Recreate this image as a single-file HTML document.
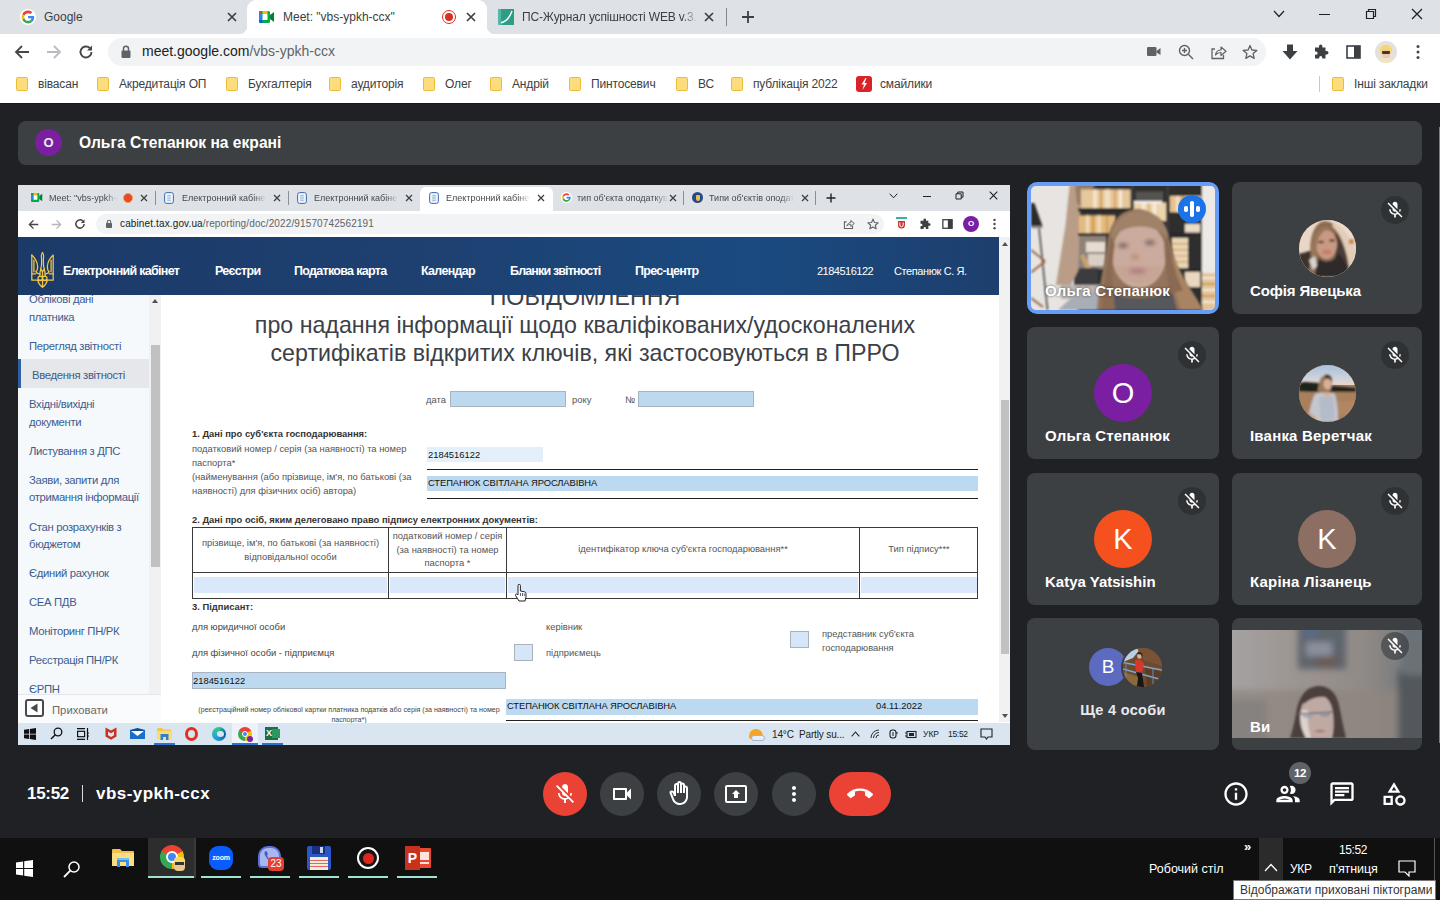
<!DOCTYPE html>
<html lang="uk">
<head>
<meta charset="utf-8">
<title>Meet</title>
<style>
*{box-sizing:border-box;margin:0;padding:0}
html,body{width:1440px;height:900px;overflow:hidden;background:#202124;font-family:"Liberation Sans",sans-serif;}
.abs{position:absolute}
#root{position:relative;width:1440px;height:900px;overflow:hidden;background:#202124}
/* ===== outer chrome ===== */
#tabstrip{left:0;top:0;width:1440px;height:34px;background:#dee1e6}
.otab{position:absolute;top:0;height:34px;font-size:12px;color:#3c4043;line-height:34px;white-space:nowrap}
#tab-active{left:247px;top:0;width:240px;height:34px;background:#fff;border-radius:9px 9px 0 0}
#toolbar{left:0;top:34px;width:1440px;height:34px;background:#fff}
#omnibox{left:108px;top:38px;width:1158px;height:28px;border-radius:14px;background:#f1f3f4}
#bookmarks{left:0;top:68px;width:1440px;height:35px;background:#fff}
.bm{position:absolute;top:68px;height:32px;line-height:32px;font-size:12px;letter-spacing:-0.15px;color:#3c4043;white-space:nowrap}
.folder{position:absolute;top:77px;width:12px;height:14px;background:#fcdc7c;border:1px solid #edbd3a;border-radius:1.5px}
/* ===== meet ===== */
#banner{left:18px;top:121px;width:1404px;height:44px;border-radius:8px;background:#3c4043}
.tile{position:absolute;background:#3c4043;border-radius:8px;overflow:hidden}
.tname{position:absolute;left:18px;bottom:14px;color:#fff;font-weight:bold;font-size:15px;line-height:18px;white-space:nowrap;letter-spacing:.2px}
.mute{position:absolute;right:13px;top:14px;width:28px;height:28px;border-radius:50%;background:rgba(32,33,36,.45)}
.av{position:absolute;border-radius:50%;color:#fff;text-align:center}
/* ===== bottom ===== */
#taskbar{left:0;top:838px;width:1440px;height:62px;background:#101010}
.cbtn{position:absolute;top:772px;width:44px;height:44px;border-radius:50%;background:#3c4043}
</style>
</head>
<body>
<div id="root">

<!-- OUTER CHROME -->
<div id="tabstrip" class="abs"></div>
<div id="tab-active" class="abs"></div>
<div id="toolbar" class="abs"></div>
<div id="omnibox" class="abs"></div>
<div id="bookmarks" class="abs"></div>
<!-- inverse corners of active tab -->
<div class="abs" style="left:239px;top:26px;width:8px;height:8px;background:radial-gradient(circle at 0 0,#dee1e6 8px,#fff 8.5px)"></div>
<div class="abs" style="left:487px;top:26px;width:8px;height:8px;background:radial-gradient(circle at 100% 0,#dee1e6 8px,#fff 8.5px)"></div>
<!-- tab 1: Google -->
<svg class="abs" style="left:20px;top:9px" width="16" height="16" viewBox="0 0 48 48"><circle cx="24" cy="24" r="24" fill="#fff"/><path fill="#EA4335" d="M24 9.5c3.54 0 6.71 1.22 9.21 3.6l6.85-6.85C35.9 2.38 30.47 0 24 0 14.62 0 6.51 5.38 2.56 13.22l7.98 6.19C12.43 13.72 17.74 9.5 24 9.5z" transform="translate(4.8 4.8) scale(.8)"/><path fill="#4285F4" d="M46.98 24.55c0-1.57-.15-3.09-.38-4.55H24v9.02h12.94c-.58 2.96-2.26 5.48-4.78 7.18l7.73 6c4.51-4.18 7.09-10.36 7.09-17.65z" transform="translate(4.8 4.8) scale(.8)"/><path fill="#FBBC05" d="M10.53 28.59c-.48-1.45-.76-2.99-.76-4.59s.27-3.14.76-4.59l-7.98-6.19C.92 16.46 0 20.12 0 24c0 3.880.92 7.540 2.56 10.78l7.97-6.19z" transform="translate(4.8 4.8) scale(.8)"/><path fill="#34A853" d="M24 48c6.48 0 11.93-2.13 15.89-5.81l-7.73-6c-2.15 1.45-4.92 2.3-8.16 2.3-6.26 0-11.570-4.22-13.470-9.91l-7.98 6.190C6.51 42.620 14.620 48 24 48z" transform="translate(4.8 4.800) scale(.8)"/></svg>
<div class="otab" style="left:44px">Google</div>
<svg class="abs" style="left:226px;top:11px" width="12" height="12" viewBox="0 0 12 12"><path d="M2 2 L10 10 M10 2 L2 10" stroke="#3c4043" stroke-width="1.7" fill="none"/></svg>
<!-- tab 2: Meet (active) -->
<svg class="abs" style="left:259px;top:10px" width="16" height="14" viewBox="0 0 16 14"><rect x="0" y="1" width="11" height="12" rx="1.5" fill="#00ac47"/><path d="M0 4 L3.500 1 H0 Z" fill="#ea4335"/><rect x="0" y="4" width="3.500" height="6" fill="#2684fc"/><path d="M0 10 H3.500 V13 H1.500 A1.500 1.500 0 0 1 0 11.500Z" fill="#0066da"/><rect x="3.500" y="1" width="5" height="3" fill="#ffba00"/><rect x="3.5" y="4" width="5" height="6" fill="#fff"/><path d="M11 5 L15 2 V12 L11 9 Z" fill="#00832d"/></svg>
<div class="otab" style="left:283px">Meet: "vbs-ypkh-ccx"</div>
<div class="abs" style="left:442px;top:10px;width:14px;height:14px;border-radius:50%;border:1.5px solid #d93025;background:#fff"></div>
<div class="abs" style="left:445px;top:13px;width:8px;height:8px;border-radius:50%;background:#d93025"></div>
<svg class="abs" style="left:465px;top:11px" width="12" height="12" viewBox="0 0 12 12"><path d="M2 2 L10 10 M10 2 L2 10" stroke="#3c4043" stroke-width="1.7" fill="none"/></svg>
<!-- tab 3 -->
<div class="abs" style="left:498px;top:9px;width:16px;height:16px;background:#2e9d87"></div>
<svg class="abs" style="left:498px;top:9px" width="16" height="16" viewBox="0 0 16 16"><path d="M2 14 C8 13 12 8 14 2" stroke="#fff" stroke-width="1.4" fill="none"/><rect x="0" y="0" width="3" height="16" fill="#54b8a6"/></svg>
<div class="otab" style="left:522px;width:176px;letter-spacing:-0.150px;overflow:hidden;-webkit-mask-image:linear-gradient(90deg,#000 160px,transparent 176px)">ПС-Журнал успішності WEB v.3.0</div>
<svg class="abs" style="left:703px;top:11px" width="12" height="12" viewBox="0 0 12 12"><path d="M2 2 L10 10 M10 2 L2 10" stroke="#3c4043" stroke-width="1.7" fill="none"/></svg>
<div class="abs" style="left:726px;top:8px;width:1px;height:18px;background:#80868b"></div>
<svg class="abs" style="left:741px;top:10px" width="14" height="14" viewBox="0 0 14 14"><path d="M7 1 V13 M1 7 H13" stroke="#3c4043" stroke-width="1.800" fill="none"/></svg>
<!-- window controls -->
<svg class="abs" style="left:1273px;top:10px" width="12" height="8" viewBox="0 0 12 8"><path d="M1 1 L6 6.500 L11 1" stroke="#202124" stroke-width="1.2" fill="none"/></svg>
<div class="abs" style="left:1319px;top:14px;width:11px;height:1.200px;background:#202124"></div>
<svg class="abs" style="left:1365px;top:8px" width="12" height="12" viewBox="0 0 12 12"><path d="M1.500 3.500 H8.500 V10.500 H1.500 Z M3.500 3.500 V1.500 H10.500 V8.500 H8.500" stroke="#202124" stroke-width="1.200" fill="none"/></svg>
<svg class="abs" style="left:1411px;top:8px" width="12" height="12" viewBox="0 0 12 12"><path d="M1 1 L11 11 M11 1 L1 11" stroke="#202124" stroke-width="1.300" fill="none"/></svg>
<!-- nav buttons -->
<svg class="abs" style="left:14px;top:44px" width="16" height="16" viewBox="0 0 16 16"><path d="M15 8 H2 M8 2 L2 8 L8 14" stroke="#474747" stroke-width="1.800" fill="none"/></svg>
<svg class="abs" style="left:46px;top:44px" width="16" height="16" viewBox="0 0 16 16"><path d="M1 8 H14 M8 2 L14 8 L8 14" stroke="#b8bcc1" stroke-width="1.800" fill="none"/></svg>
<svg class="abs" style="left:78px;top:44px" width="16" height="16" viewBox="0 0 16 16"><path d="M13.500 8 A5.500 5.500 0 1 1 11.800 4" stroke="#474747" stroke-width="1.900" fill="none"/><path d="M14 1.500 V6.500 H9 Z" fill="#474747"/></svg>
<!-- lock -->
<svg class="abs" style="left:120px;top:45px" width="12" height="14" viewBox="0 0 12 14"><rect x="1.500" y="5.500" width="9" height="7.500" rx="1" fill="#5f6368"/><path d="M3.500 6 V3.800 A2.500 2.500 0 0 1 8.500 3.800 V6" stroke="#5f6368" stroke-width="1.500" fill="none"/></svg>
<div class="abs" style="left:142px;top:34px;height:34px;line-height:35px;font-size:14px;color:#202124;white-space:nowrap">meet.google.com<span style="color:#5f6368">/vbs-ypkh-ccx</span></div>
<!-- omnibox right icons -->
<svg class="abs" style="left:1147px;top:46px" width="14" height="11" viewBox="0 0 14 11"><rect x="0" y="1" width="9.500" height="9" rx="1.200" fill="#5f6368"/><path d="M9.500 5 L13.500 2 V9 L9.500 6.500Z" fill="#5f6368"/></svg>
<svg class="abs" style="left:1178px;top:44px" width="16" height="16" viewBox="0 0 16 16"><circle cx="6.500" cy="6.500" r="5" stroke="#5f6368" stroke-width="1.400" fill="none"/><path d="M10.300 10.300 L15 15 M4 6.500 H9 M6.500 4 V9" stroke="#5f6368" stroke-width="1.400" fill="none"/></svg>
<svg class="abs" style="left:1210px;top:44px" width="17" height="16" viewBox="0 0 17 16"><path d="M5 5 H2 V14.500 H13.500 V11" stroke="#5f6368" stroke-width="1.300" fill="none"/><path d="M5.500 11 C6 7.500 8.500 6 11 6 V3 L16 7.300 L11 11.500 V8.500 C8.500 8.500 7 9 5.500 11Z" stroke="#5f6368" stroke-width="1.200" fill="none" stroke-linejoin="round"/></svg>
<svg class="abs" style="left:1242px;top:44px" width="16" height="16" viewBox="0 0 16 16"><path d="M8 1.500 L9.900 6 L14.800 6.400 L11.100 9.600 L12.200 14.400 L8 11.900 L3.800 14.400 L4.900 9.600 L1.200 6.400 L6.100 6 Z" stroke="#5f6368" stroke-width="1.300" fill="none" stroke-linejoin="round"/></svg>
<!-- toolbar right icons -->
<svg class="abs" style="left:1282px;top:44px" width="16" height="16" viewBox="0 0 16 16"><path d="M5 0.500 H11 V7 H15.500 L8 15.500 L0.500 7 H5 Z" fill="#3c4043"/></svg>
<svg class="abs" style="left:1313px;top:44px" width="16" height="16" viewBox="0 0 16 16"><path d="M6 2.200 a1.700 1.700 0 0 1 3.400 0 V3.500 H12.500 V7 H13.800 a1.700 1.700 0 0 1 0 3.400 H12.500 V14.500 H9.200 V13.500 a1.500 1.500 0 0 0 -3 0 V14.500 H2 V10.800 H3 a1.600 1.600 0 0 0 0 -3.200 H2 V3.500 H6 Z" fill="#3c4043"/></svg>
<svg class="abs" style="left:1346px;top:45px" width="15" height="14" viewBox="0 0 15 14"><rect x="1" y="1" width="13" height="12" stroke="#3c4043" stroke-width="1.600" fill="none"/><rect x="8" y="1" width="6" height="12" fill="#3c4043"/></svg>
<div class="abs" style="left:1375px;top:41px;width:22px;height:22px;border-radius:50%;background:#e4e0da;overflow:hidden"><div class="abs" style="left:5px;top:4px;width:12px;height:10px;border-radius:50% 50% 40% 40%;background:#f5d76b"></div><div class="abs" style="left:7px;top:8px;width:8px;height:9px;border-radius:40%;background:#f1c9a8"></div><div class="abs" style="left:7px;top:10px;width:8px;height:2.500px;background:#3b3b3b;border-radius:1px"></div><div class="abs" style="left:4px;top:17px;width:14px;height:6px;border-radius:50% 50% 0 0;background:#f0e4c4"></div></div>
<svg class="abs" style="left:1416px;top:44px" width="4" height="16" viewBox="0 0 4 16"><circle cx="2" cy="2.500" r="1.500" fill="#474747"/><circle cx="2" cy="8" r="1.500" fill="#474747"/><circle cx="2" cy="13.500" r="1.500" fill="#474747"/></svg>
<!-- bookmarks -->
<div class="folder" style="left:16px"></div><div class="bm" style="left:38px">вівасан</div>
<div class="folder" style="left:97px"></div><div class="bm" style="left:119px">Акредитація ОП</div>
<div class="folder" style="left:226px"></div><div class="bm" style="left:248px">Бухгалтерія</div>
<div class="folder" style="left:329px"></div><div class="bm" style="left:351px">аудиторія</div>
<div class="folder" style="left:423px"></div><div class="bm" style="left:445px">Олег</div>
<div class="folder" style="left:490px"></div><div class="bm" style="left:512px">Андрій</div>
<div class="folder" style="left:569px"></div><div class="bm" style="left:591px">Пинтосевич</div>
<div class="folder" style="left:676px"></div><div class="bm" style="left:698px">ВС</div>
<div class="folder" style="left:731px"></div><div class="bm" style="left:753px">публікація 2022</div>
<div class="abs" style="left:856px;top:76px;width:16px;height:16px;border-radius:3px;background:#d8232a"></div>
<svg class="abs" style="left:856px;top:76px" width="16" height="16" viewBox="0 0 16 16"><path d="M9.500 2 L5.500 8.500 H8 L6.500 14 L11 7 H8.500 L10.500 2 Z" fill="#fff"/></svg>
<div class="bm" style="left:880px">смайлики</div>
<div class="abs" style="left:1319px;top:76px;width:1px;height:16px;background:#c4c7cc"></div>
<div class="folder" style="left:1332px"></div><div class="bm" style="left:1354px">Інші закладки</div>
<!--CHROME-DETAILS-END-->

<!-- MEET BANNER -->
<div class="abs" style="left:1438.500px;top:127px;width:1.500px;height:616px;background:#7c7e80"></div>
<div class="abs" style="left:0;top:103px;width:1440px;height:1px;background:#17181a"></div>
<div id="banner" class="abs"></div>
<!-- banner details -->
<div class="av abs" style="left:35px;top:129px;width:27px;height:27px;background:#7b1fa2;font-size:13px;font-weight:bold;line-height:27px;color:#e8eaed">O</div>
<div class="abs" style="left:79px;top:121px;height:44px;line-height:43px;color:#fff;font-size:15.600px;font-weight:bold;white-space:nowrap">Ольга Степанюк на екрані</div>


<!-- SHARED SCREEN -->
<div id="share" class="abs" style="left:18px;top:184px;width:992px;height:561px;background:#fff;overflow:hidden">
<style>
#share{font-family:"Liberation Sans",sans-serif}
.itab{position:absolute;top:1px;height:26px;line-height:26px;font-size:9px;color:#45494d;white-space:nowrap;overflow:hidden}
.ix{position:absolute;top:10px;width:8px;height:8px}
.side{position:absolute;left:11px;font-size:11.300px;color:#3b5d8f;white-space:nowrap;letter-spacing:-0.33px}
.nav{position:absolute;top:58px;height:58px;line-height:58px;color:#fff;font-weight:bold;font-size:12.500px;white-space:nowrap;letter-spacing:-0.700px}
.d{position:absolute;font-size:9.400px;color:#555;white-space:nowrap}
.db{position:absolute;font-size:9.400px;color:#333;font-weight:bold;white-space:nowrap}
.dv{position:absolute;font-size:9.400px;color:#111;white-space:nowrap}
.fld{position:absolute;background:#bdd9ef}
.cb{position:absolute;width:19px;height:17px;background:#d5e6f8;border:1px solid #aab3bd}
.ln{position:absolute;height:1px;background:#222}
</style>
<!-- coordinates inside #share are relative to (18,184) -->
<div class="abs" style="left:0;top:0;width:992px;height:1px;background:#202124"></div>
<div class="abs" style="left:0;top:1px;width:992px;height:26px;background:#dee1e6"></div>
<!-- active inner tab -->
<div class="abs" style="left:402px;top:3px;width:133px;height:24px;background:#fff;border-radius:6px 6px 0 0"></div>
<!-- tab1 meet -->
<svg class="abs" style="left:13px;top:8px" width="12" height="11" viewBox="0 0 16 14"><rect x="0" y="1" width="11" height="12" rx="1.5" fill="#00ac47"/><path d="M0 4 L3.500 1 H0 Z" fill="#ea4335"/><rect x="0" y="4" width="3.5" height="6" fill="#2684fc"/><rect x="3.5" y="1" width="5" height="3" fill="#ffba00"/><rect x="3.500" y="4" width="5" height="6" fill="#fff"/><path d="M11 5 L15 2 V12 L11 9 Z" fill="#00832d"/></svg>
<div class="itab" style="left:31px;width:69px;-webkit-mask-image:linear-gradient(90deg,#000 56px,transparent 69px)">Meet: "vbs-ypkh-ccx"</div>
<div class="abs" style="left:105px;top:9px;width:10px;height:10px;border-radius:50%;background:#e8472f;border:1.5px solid #f0a030"></div>
<svg class="ix" style="left:122px" viewBox="0 0 8 8"><path d="M1 1 L7 7 M7 1 L1 7" stroke="#3c4043" stroke-width="1.3"/></svg>
<div class="abs" style="left:137px;top:7px;width:1px;height:14px;background:#8a8f96"></div>
<!-- tab2 -->
<svg class="abs" style="left:146px;top:8px" width="10" height="12" viewBox="0 0 10 12"><rect x=".6" y=".6" width="8.800" height="10.800" rx="2" fill="#eef3fa" stroke="#3d6db0" stroke-width="1"/><path d="M3.200 3.800 H6.800 M3.200 6 H6.800 M3.200 8.200 H6.800" stroke="#3d6db0" stroke-width=".55"/></svg>
<div class="itab" style="left:164px;width:84px;-webkit-mask-image:linear-gradient(90deg,#000 72px,transparent 84px)">Електронний кабінет</div>
<svg class="ix" style="left:255px" viewBox="0 0 8 8"><path d="M1 1 L7 7 M7 1 L1 7" stroke="#3c4043" stroke-width="1.300"/></svg>
<div class="abs" style="left:270px;top:7px;width:1px;height:14px;background:#8a8f96"></div>
<!-- tab3 -->
<svg class="abs" style="left:279px;top:8px" width="10" height="12" viewBox="0 0 10 12"><rect x=".6" y=".6" width="8.800" height="10.800" rx="2" fill="#eef3fa" stroke="#3d6db0" stroke-width="1"/><path d="M3.200 3.800 H6.800 M3.200 6 H6.800 M3.200 8.200 H6.800" stroke="#3d6db0" stroke-width=".55"/></svg>
<div class="itab" style="left:296px;width:84px;-webkit-mask-image:linear-gradient(90deg,#000 72px,transparent 84px)">Електронний кабінет</div>
<svg class="ix" style="left:387px" viewBox="0 0 8 8"><path d="M1 1 L7 7 M7 1 L1 7" stroke="#3c4043" stroke-width="1.300"/></svg>
<!-- tab4 active -->
<svg class="abs" style="left:411px;top:8px" width="10" height="12" viewBox="0 0 10 12"><rect x=".6" y=".6" width="8.800" height="10.800" rx="2" fill="#eef3fa" stroke="#3d6db0" stroke-width="1"/><path d="M3.200 3.800 H6.800 M3.200 6 H6.800 M3.200 8.200 H6.800" stroke="#3d6db0" stroke-width=".55"/></svg>
<div class="itab" style="left:428px;width:84px;-webkit-mask-image:linear-gradient(90deg,#000 72px,transparent 84px)">Електронний кабінет</div>
<svg class="ix" style="left:519px" viewBox="0 0 8 8"><path d="M1 1 L7 7 M7 1 L1 7" stroke="#3c4043" stroke-width="1.300"/></svg>
<!-- tab5 google -->
<svg class="abs" style="left:543px;top:8px" width="11" height="11" viewBox="0 0 48 48"><circle cx="24" cy="24" r="24" fill="#fff"/><path fill="#EA4335" d="M24 13c3 0 5.400 1 7.300 2.800l5.400-5.400C33.400 7.300 29 5.500 24 5.500c-7.500 0-14 4.300-17 10.500l6.300 4.900C14.800 16.400 19 13 24 13z"/><path fill="#4285F4" d="M42.400 24.400c0-1.300-.1-2.500-.3-3.600H24v7.200h10.400c-.5 2.400-1.800 4.400-3.800 5.700l6.200 4.800c3.600-3.300 5.600-8.300 5.600-14.100z"/><path fill="#FBBC05" d="M13.300 27.700c-.4-1.200-.6-2.400-.6-3.700s.2-2.500.6-3.700L7 15.400C5.700 18 5 20.900 5 24s.7 6 2 8.600l6.300-4.900z"/><path fill="#34A853" d="M24 43c5.200 0 9.500-1.700 12.700-4.600l-6.200-4.800c-1.700 1.200-3.900 1.800-6.500 1.800-5 0-9.200-3.400-10.700-7.900L7 32.400C10 38.700 16.500 43 24 43z"/></svg>
<div class="itab" style="left:559px;width:91px;-webkit-mask-image:linear-gradient(90deg,#000 78px,transparent 91px)">тип об'єкта оподаткування</div>
<svg class="ix" style="left:651px" viewBox="0 0 8 8"><path d="M1 1 L7 7 M7 1 L1 7" stroke="#3c4043" stroke-width="1.300"/></svg>
<div class="abs" style="left:665px;top:7px;width:1px;height:14px;background:#8a8f96"></div>
<!-- tab6 -->
<div class="abs" style="left:674px;top:8px;width:11px;height:11px;border-radius:50%;background:#274b8a"></div>
<div class="abs" style="left:677.500px;top:10.500px;width:4px;height:6px;border-radius:1px 1px 2px 2px;background:#e7c24d"></div>
<div class="itab" style="left:691px;width:85px;-webkit-mask-image:linear-gradient(90deg,#000 72px,transparent 85px)">Типи об'єктів оподаткування</div>
<svg class="ix" style="left:783px" viewBox="0 0 8 8"><path d="M1 1 L7 7 M7 1 L1 7" stroke="#3c4043" stroke-width="1.300"/></svg>
<div class="abs" style="left:797px;top:7px;width:1px;height:14px;background:#8a8f96"></div>
<svg class="abs" style="left:808px;top:9px" width="10" height="10" viewBox="0 0 10 10"><path d="M5 .500 V9.500 M.500 5 H9.500" stroke="#202124" stroke-width="1.400"/></svg>
<!-- inner window controls -->
<svg class="abs" style="left:871px;top:9px" width="9" height="6" viewBox="0 0 9 6"><path d="M.700 .700 L4.500 4.800 L8.300 .700" stroke="#202124" stroke-width="1" fill="none"/></svg>
<div class="abs" style="left:905px;top:12px;width:8px;height:1.300px;background:#202124"></div>
<svg class="abs" style="left:937px;top:7px" width="9" height="9" viewBox="0 0 9 9"><path d="M1 2.800 H6.200 V8 H1 Z M2.800 2.800 V1 H8 V6.200 H6.200" stroke="#202124" stroke-width="1" fill="none"/></svg>
<svg class="abs" style="left:971px;top:7px" width="9" height="9" viewBox="0 0 9 9"><path d="M.700 .700 L8.300 8.300 M8.300 .700 L.700 8.300" stroke="#202124" stroke-width="1.100"/></svg>
<!-- inner toolbar -->
<div class="abs" style="left:0;top:27px;width:992px;height:26px;background:#fff"></div>
<div class="abs" style="left:78px;top:30px;width:788px;height:20px;border-radius:10px;background:#f1f3f4"></div>
<svg class="abs" style="left:10px;top:35px" width="11" height="11" viewBox="0 0 16 16"><path d="M15 8 H2 M8 2 L2 8 L8 14" stroke="#474747" stroke-width="2" fill="none"/></svg>
<svg class="abs" style="left:33px;top:35px" width="11" height="11" viewBox="0 0 16 16"><path d="M1 8 H14 M8 2 L14 8 L8 14" stroke="#b3b7bc" stroke-width="2" fill="none"/></svg>
<svg class="abs" style="left:56px;top:34px" width="12" height="12" viewBox="0 0 16 16"><path d="M13.500 8 A5.500 5.500 0 1 1 11.800 4" stroke="#474747" stroke-width="2" fill="none"/><path d="M14 1.500 V6.500 H9 Z" fill="#474747"/></svg>
<svg class="abs" style="left:87px;top:35px" width="8" height="10" viewBox="0 0 12 14"><rect x="1.500" y="5.500" width="9" height="7.500" rx="1" fill="#5f6368"/><path d="M3.500 6 V3.800 A2.500 2.500 0 0 1 8.500 3.800 V6" stroke="#5f6368" stroke-width="1.600" fill="none"/></svg>
<div class="abs" style="left:102px;top:27px;height:26px;line-height:26px;font-size:10px;color:#202124;white-space:nowrap;letter-spacing:.13px">cabinet.tax.gov.ua<span style="color:#5f6368">/reporting/doc/2022/91570742562191</span></div>
<svg class="abs" style="left:825px;top:34px" width="12" height="12" viewBox="0 0 17 16"><path d="M5 5 H2 V14.500 H13.500 V11" stroke="#5f6368" stroke-width="1.500" fill="none"/><path d="M5.500 11 C6 7.500 8.500 6 11 6 V3 L16 7.300 L11 11.500 V8.500 C8.500 8.500 7 9 5.500 11Z" stroke="#5f6368" stroke-width="1.400" fill="none" stroke-linejoin="round"/></svg>
<svg class="abs" style="left:849px;top:34px" width="12" height="12" viewBox="0 0 16 16"><path d="M8 1.500 L9.900 6 L14.800 6.400 L11.100 9.600 L12.200 14.400 L8 11.900 L3.800 14.400 L4.900 9.600 L1.200 6.400 L6.100 6 Z" stroke="#5f6368" stroke-width="1.500" fill="none" stroke-linejoin="round"/></svg>
<div class="abs" style="left:878px;top:33px;width:11px;height:1.500px;background:#3ab0a0"></div>
<svg class="abs" style="left:879px;top:36px" width="9" height="9" viewBox="0 0 9 9"><path d="M1 1 H8 V5 A3.500 3.500 0 0 1 1 5 Z" fill="#c8372d"/><path d="M2.800 2.500 V5 A1.700 1.700 0 0 0 6.200 5 V2.500" stroke="#fff" stroke-width="1" fill="none"/></svg>
<svg class="abs" style="left:901px;top:34px" width="12" height="12" viewBox="0 0 16 16"><path d="M6 2.200 a1.700 1.700 0 0 1 3.400 0 V3.500 H12.500 V7 H13.800 a1.700 1.700 0 0 1 0 3.400 H12.500 V14.500 H9.200 V13.500 a1.500 1.500 0 0 0 -3 0 V14.500 H2 V10.800 H3 a1.600 1.600 0 0 0 0 -3.200 H2 V3.500 H6 Z" fill="#3c4043"/></svg>
<svg class="abs" style="left:924px;top:35px" width="11" height="10" viewBox="0 0 15 14"><rect x="1" y="1" width="13" height="12" stroke="#3c4043" stroke-width="1.800" fill="none"/><rect x="8" y="1" width="6" height="12" fill="#3c4043"/></svg>
<div class="abs" style="left:945px;top:32px;width:16px;height:16px;border-radius:50%;background:#7b1fa2;color:#fff;font-size:8px;font-weight:bold;text-align:center;line-height:16px">O</div>
<svg class="abs" style="left:975px;top:34px" width="3" height="12" viewBox="0 0 4 16"><circle cx="2" cy="2.500" r="1.600" fill="#474747"/><circle cx="2" cy="8" r="1.600" fill="#474747"/><circle cx="2" cy="13.500" r="1.600" fill="#474747"/></svg>
<!-- site header -->
<div class="abs" style="left:0;top:53px;width:981px;height:58px;background:linear-gradient(90deg,#1c3a68 0%,#1d4172 45%,#1a4a80 75%,#1d3f6e 100%)"></div>
<div class="abs" style="left:981px;top:53px;width:11px;height:485px;background:#f1f1f1"></div>
<svg class="abs" style="left:13px;top:68px" width="23" height="36" viewBox="0 0 23 36"><g stroke="#f3c744" stroke-width="1.250" fill="none" stroke-linejoin="round" stroke-linecap="round">
<path d="M0.800 3 V28.200 H6.600 C7.600 31.800 9.400 34 11.500 35.300 C13.600 34 15.400 31.800 16.400 28.200 H22.200 V3 C18.500 6.500 16.600 10 16.400 14.500 C16.300 17.500 17 19 18.200 19.600 C17.500 21.200 15.800 22 14 22"/>
<path d="M0.800 3 C4.500 6.500 6.400 10 6.600 14.500 C6.700 17.500 6 19 4.800 19.600 C5.500 21.200 7.200 22 9 22"/>
<path d="M11.500 .600 C10.300 2.200 10.200 4 10.500 6 C10.800 10 10.600 14 9.800 17 C9 20 8.400 22 9 24.500"/>
<path d="M11.500 .600 C12.700 2.200 12.800 4 12.500 6 C12.200 10 12.400 14 13.200 17 C14 20 14.600 22 14 24.500"/>
<path d="M0.800 21.800 H4.800 M18.200 21.800 H22.200 M2.900 8 V19.800 M20.100 8 V19.800"/>
<circle cx="9.300" cy="26.300" r="2.300"/><circle cx="13.700" cy="26.300" r="2.300"/>
<path d="M11.500 19 V35 M6.600 28.200 H16.400 M9.800 17 L11.500 20 L13.200 17"/>
</g></svg>

<div class="nav" style="left:45px">Електронний кабінет</div>
<div class="nav" style="left:197px">Реєстри</div>
<div class="nav" style="left:276px">Податкова карта</div>
<div class="nav" style="left:403px">Календар</div>
<div class="nav" style="left:492px;letter-spacing:-0.850px">Бланки звітності</div>
<div class="nav" style="left:617px">Прес-центр</div>
<div class="nav" style="left:799px;font-weight:normal;font-size:11px;letter-spacing:-0.500px">2184516122</div>
<div class="nav" style="left:876px;font-weight:normal;font-size:11px;letter-spacing:-0.400px">Степанюк С. Я.</div>
<!-- sidebar -->
<div class="abs" style="left:0;top:111px;width:131px;height:428px;background:#f6f9fc"></div>
<div class="abs" style="left:131px;top:111px;width:12px;height:400px;background:#f1f1f1"></div>
<div class="abs" style="left:133px;top:161px;width:9px;height:222px;background:#c1c1c1"></div>
<svg class="abs" style="left:134px;top:115px" width="6" height="4" viewBox="0 0 6 4"><path d="M0 4 L3 0 L6 4Z" fill="#505050"/></svg>
<div class="abs" style="left:0;top:175px;width:131px;height:29px;background:#e5e7ea"></div>
<div class="abs" style="left:0;top:175px;width:3px;height:29px;background:#2f5fa3"></div>
<div class="side" style="top:108.5px">Облікові дані</div>
<div class="side" style="top:126.5px">платника</div>
<div class="side" style="top:155.5px">Перегляд звітності</div>
<div class="side" style="top:184.5px;left:14px">Введення звітності</div>
<div class="side" style="top:213.5px">Вхідні/вихідні</div>
<div class="side" style="top:231.5px">документи</div>
<div class="side" style="top:260.5px">Листування з ДПС</div>
<div class="side" style="top:289.5px">Заяви, запити для</div>
<div class="side" style="top:306.5px">отримання інформації</div>
<div class="side" style="top:336.5px">Стан розрахунків з</div>
<div class="side" style="top:353.5px">бюджетом</div>
<div class="side" style="top:382.5px">Єдиний рахунок</div>
<div class="side" style="top:411.5px">СЕА ПДВ</div>
<div class="side" style="top:440.5px">Моніторинг ПН/РК</div>
<div class="side" style="top:469.5px">Реєстрація ПН/РК</div>
<div class="side" style="top:498.5px">ЄРПН</div>
<!-- hide footer -->
<div class="abs" style="left:0;top:510px;width:143px;height:29px;background:#fafbfc;border-top:1px solid #e3e6ea"></div>
<div class="abs" style="left:7px;top:515px;width:19px;height:18px;border:2px solid #4a4a4a;border-radius:3px;background:#fff"></div>
<svg class="abs" style="left:12px;top:519px" width="8" height="10" viewBox="0 0 8 10"><path d="M7.500 .500 V9.500 L.500 5Z" fill="#4a4a4a"/></svg>
<div class="abs" style="left:34px;top:519px;font-size:11.300px;color:#6a6a6a;white-space:nowrap;line-height:14px">Приховати</div>

<!-- doc area -->
<div class="abs" id="doc" style="left:143px;top:111px;width:838px;height:428px;overflow:hidden;background:#fff">
<div class="abs" style="left:-143px;top:-111px;width:992px;height:561px">
<div class="abs" style="left:167px;top:99px;width:800px;text-align:center;font-size:23.200px;line-height:28px;color:#3c4047;white-space:nowrap">ПОВІДОМЛЕННЯ<br>про надання інформації щодо кваліфікованих/удосконалених<br>сертифікатів відкритих ключів, які застосовуються в ПРРО</div>
<!-- date row -->
<div class="d" style="left:408px;top:210px">дата</div>
<div class="fld" style="left:432px;top:207px;width:116px;height:16px;border:1px solid #a9b4c0"></div>
<div class="d" style="left:554px;top:210px">року</div>
<div class="d" style="left:607px;top:210px">№</div>
<div class="fld" style="left:620px;top:207px;width:116px;height:16px;border:1px solid #a9b4c0"></div>
<!-- section 1 -->
<div class="db" style="left:174px;top:244px">1. Дані про суб'єкта господарювання:</div>
<div class="d" style="left:174px;top:258px;line-height:14px">податковий номер / серія (за наявності) та номер<br>паспорта*<br>(найменування (або прізвище, ім'я, по батькові (за<br>наявності) для фізичних осіб) автора)</div>
<div class="abs" style="left:409px;top:263px;width:116px;height:15px;background:#e3f0fb"></div>
<div class="dv" style="left:410px;top:265px">2184516122</div>
<div class="ln" style="left:409px;top:285px;width:551px"></div>
<div class="fld" style="left:409px;top:292px;width:551px;height:15px"></div>
<div class="dv" style="left:410px;top:293px;letter-spacing:-0.100px">СТЕПАНЮК СВІТЛАНА ЯРОСЛАВІВНА</div>
<div class="ln" style="left:409px;top:314px;width:551px"></div>
<!-- section 2 -->
<div class="db" style="left:174px;top:330px">2. Дані про осіб, яким делеговано право підпису електронних документів:</div>
<div class="abs" style="left:174px;top:343px;width:786px;height:72px;border:1px solid #3a3a3a"></div>
<div class="abs" style="left:174px;top:388px;width:786px;height:1px;background:#3a3a3a"></div>
<div class="abs" style="left:370px;top:343px;width:1px;height:72px;background:#3a3a3a"></div>
<div class="abs" style="left:488px;top:343px;width:1px;height:72px;background:#3a3a3a"></div>
<div class="abs" style="left:841px;top:343px;width:1px;height:72px;background:#3a3a3a"></div>
<div class="abs" style="left:176px;top:393px;width:193px;height:16px;background:#d9e9fb"></div>
<div class="abs" style="left:372px;top:393px;width:115px;height:16px;background:#d9e9fb"></div>
<div class="abs" style="left:490px;top:393px;width:350px;height:16px;background:#d9e9fb"></div>
<div class="abs" style="left:843px;top:393px;width:116px;height:16px;background:#d9e9fb"></div>
<div class="d" style="left:175px;top:352px;width:195px;text-align:center;line-height:13.500px">прізвище, ім'я, по батькові (за наявності)<br>відповідальної особи</div>
<div class="d" style="left:371px;top:345px;width:117px;text-align:center;line-height:13.500px">податковий номер / серія<br>(за наявності) та номер<br>паспорта *</div>
<div class="d" style="left:489px;top:359px;width:352px;text-align:center">ідентифікатор ключа суб'єкта господарювання**</div>
<div class="d" style="left:842px;top:359px;width:118px;text-align:center">Тип підпису***</div>
<!-- section 3 -->
<div class="db" style="left:174px;top:417px">3. Підписант:</div>
<div class="d" style="left:174px;top:437px;color:#444">для юридичної особи</div>
<div class="d" style="left:528px;top:437px">керівник</div>
<div class="d" style="left:174px;top:463px;color:#444">для фізичної особи - підприємця</div>
<div class="cb" style="left:496px;top:460px"></div>
<div class="d" style="left:528px;top:463px">підприємець</div>
<div class="cb" style="left:772px;top:447px"></div>
<div class="d" style="left:804px;top:443px;line-height:14px">представник суб'єкта<br>господарювання</div>
<div class="fld" style="left:174px;top:488px;width:314px;height:17px;border:1px solid #a9b4c0"></div>
<div class="dv" style="left:175px;top:491px">2184516122</div>
<div class="d" style="left:174px;top:521px;width:314px;text-align:center;font-size:7.100px;line-height:10px;color:#444">(реєстраційний номер облікової картки платника податків або серія (за наявності) та номер<br>паспорта*)</div>
<div class="fld" style="left:488px;top:515px;width:472px;height:16px"></div>
<div class="dv" style="left:489px;top:516px;letter-spacing:-0.100px">СТЕПАНЮК СВІТЛАНА ЯРОСЛАВІВНА</div>
<div class="dv" style="left:858px;top:515.500px">04.11.2022</div>
<div class="ln" style="left:488px;top:536px;width:472px"></div>
<!-- cursor hand -->
<svg class="abs" style="left:496px;top:400px" width="14" height="18" viewBox="0 0 14 18"><path d="M4 1.500 a1.200 1.200 0 0 1 2.400 0 V7 L10.500 7.800 a1.800 1.800 0 0 1 1.500 1.800 V13 L11 17 H5 L1.500 11.500 a1.100 1.100 0 0 1 1.800 -1.200 L4 11 Z" fill="#fff" stroke="#222" stroke-width="1"/><path d="M6.500 9 V12 M8.500 9 V12 M10.300 9.500 V12" stroke="#222" stroke-width=".7"/></svg>
</div>
</div>
<!-- right scrollbar bits -->
<div class="abs" style="left:983px;top:216px;width:8px;height:254px;background:#c1c1c1"></div>
<svg class="abs" style="left:984px;top:58px" width="6" height="4" viewBox="0 0 6 4"><path d="M0 4 L3 0 L6 4Z" fill="#505050"/></svg>
<svg class="abs" style="left:984px;top:530px" width="6" height="4" viewBox="0 0 6 4"><path d="M0 0 L3 4 L6 0Z" fill="#505050"/></svg>

<!-- inner taskbar -->
<div class="abs" style="left:0;top:539px;width:992px;height:22px;background:#d9e5f1"></div>
<div class="abs" style="left:214px;top:539px;width:26px;height:22px;background:#ecf2f8"></div>
<svg class="abs" style="left:6px;top:544px" width="12" height="12" viewBox="0 0 12 12"><path d="M0 1.700 L5 1 V5.700 H0Z M5.800 .900 L12 0 V5.700 H5.800Z M0 6.400 H5 V11 L0 10.300Z M5.800 6.400 H12 V12 L5.800 11.100Z" fill="#111"/></svg>
<svg class="abs" style="left:32px;top:543px" width="13" height="13" viewBox="0 0 13 13"><circle cx="8" cy="5" r="3.800" stroke="#111" stroke-width="1.300" fill="none"/><path d="M5.300 7.700 L1 12" stroke="#111" stroke-width="1.500"/></svg>
<svg class="abs" style="left:58px;top:544px" width="13" height="12" viewBox="0 0 13 12"><path d="M1 .700 H9 M1 11.300 H9 M11.500 0 V12" stroke="#111" stroke-width="1.200"/><rect x="1.600" y="3.300" width="7" height="5.400" stroke="#111" stroke-width="1.200" fill="none"/><path d="M11.500 5 H13 M11.500 8 H13" stroke="#111" stroke-width="1"/></svg>
<svg class="abs" style="left:87px;top:543px" width="12" height="13" viewBox="0 0 12 13"><path d="M.500 .500 L6 3.500 L11.500 .500 V9.500 L6 12.700 L.500 9.500Z" fill="#c8321f"/><path d="M3 4.500 L6 6.300 L9 4.500 V8.300 L6 10 L3 8.300Z" fill="#d9e5f1"/></svg>
<svg class="abs" style="left:112px;top:544px" width="15" height="11" viewBox="0 0 15 11"><rect x="0" y="2" width="15" height="9" fill="#1a6fc9"/><path d="M0 2 L7.500 0 L15 2 L7.500 7.500Z" fill="#0f4d9a"/><path d="M1 3 H14 L7.500 8Z" fill="#fff"/></svg>
<svg class="abs" style="left:139px;top:543px" width="15" height="13" viewBox="0 0 15 13"><path d="M0 1 H5 L6.500 2.500 H14 V12 H0Z" fill="#f7c648"/><rect x="0" y="4" width="15" height="8.500" fill="#fbdc74"/><rect x="3.500" y="7" width="8" height="6" fill="#2f7fd6"/><rect x="6" y="10" width="3" height="3" fill="#fbdc74"/></svg>
<div class="abs" style="left:136px;top:559px;width:21px;height:2px;background:#2a72d4"></div>
<div class="abs" style="left:167px;top:543px;width:13px;height:14px;border-radius:50%;border:3px solid #e0311f"></div>
<div class="abs" style="left:194px;top:543px;width:14px;height:14px;border-radius:50%;background:conic-gradient(from 200deg,#1b9de2,#35c1a0 120deg,#2bc48a 160deg,#0c59a4 250deg,#1b9de2)"></div>
<div class="abs" style="left:199px;top:547px;width:7px;height:6px;border-radius:50%;background:#d9e5f1"></div>
<div class="abs" style="left:220px;top:543px;width:14px;height:14px;border-radius:50%;background:conic-gradient(from -60deg,#ea4335 0 120deg,#fbbc05 120deg 240deg,#34a853 240deg 360deg)"></div>
<div class="abs" style="left:224px;top:547px;width:6px;height:6px;border-radius:50%;background:#4285f4;border:1px solid #fff"></div>
<div class="abs" style="left:229px;top:552px;width:6px;height:6px;border-radius:50%;background:#7b1fa2"></div>
<div class="abs" style="left:214px;top:559px;width:26px;height:2px;background:#2a72d4"></div>
<div class="abs" style="left:247px;top:543px;width:13px;height:13px;background:#1d6f42"></div>
<div class="abs" style="left:254px;top:545px;width:8px;height:9px;background:#2a9960"></div>
<div class="abs" style="left:248px;top:544px;font-size:9px;font-weight:bold;color:#fff;line-height:11px">X</div>
<div class="abs" style="left:244px;top:559px;width:21px;height:2px;background:#2a72d4"></div>
<!-- tray -->
<div class="abs" style="left:731px;top:545px;width:14px;height:10px;border-radius:7px 7px 2px 2px;background:#f3a52b"></div>
<div class="abs" style="left:733px;top:551px;width:14px;height:6px;border-radius:3px;background:#e8eef6;border:1px solid #9fb5d0"></div>
<div class="abs" style="left:754px;top:539px;line-height:23px;font-size:10px;color:#222;white-space:nowrap;letter-spacing:-0.150px">14°C&nbsp;&nbsp;Partly su...</div>
<svg class="abs" style="left:833px;top:547px" width="9" height="6" viewBox="0 0 9 6"><path d="M.700 5.300 L4.500 1 L8.300 5.300" stroke="#222" stroke-width="1.100" fill="none"/></svg>
<svg class="abs" style="left:852px;top:545px" width="10" height="10" viewBox="0 0 10 10"><path d="M1 9 A8 8 0 0 1 9 1 M3.500 9 A5.500 5.500 0 0 1 9 3.500 M6 9 A3 3 0 0 1 9 6" stroke="#333" stroke-width="1" fill="none"/></svg>
<svg class="abs" style="left:871px;top:544px" width="9" height="12" viewBox="0 0 9 12"><rect x="1" y="2" width="6" height="8" rx="2.500" stroke="#222" stroke-width="1.100" fill="none"/><path d="M4 4 V8 M7 5 H9" stroke="#222" stroke-width="1"/></svg>
<svg class="abs" style="left:887px;top:546px" width="12" height="9" viewBox="0 0 12 9"><rect x="2" y="1.500" width="9" height="6" stroke="#222" stroke-width="1.100" fill="none"/><rect x="4" y="3" width="5" height="3" fill="#222"/><path d="M0 3 H2 M0 6 H2" stroke="#222"/></svg>
<div class="abs" style="left:905px;top:539px;line-height:22px;font-size:8.500px;color:#222;white-space:nowrap">УКР</div>
<div class="abs" style="left:930px;top:539px;line-height:22px;font-size:8.500px;color:#222;white-space:nowrap;letter-spacing:-0.300px">15:52</div>
<svg class="abs" style="left:962px;top:544px" width="13" height="12" viewBox="0 0 13 12"><path d="M1 1 H12 V9 H8 L6.500 11 L5 9 H1Z" stroke="#222" stroke-width="1.100" fill="none"/></svg>


</div>

<!-- TILES -->
<!-- tile 1 (speaking video) -->
<div class="tile" id="t1" style="left:1027px;top:182px;width:192px;height:132px;background:#669df6;border-radius:10px">
 <div class="abs" id="t1v" style="left:4px;top:4px;width:184px;height:124px;border-radius:5px;overflow:hidden;background:#b9a48d"><svg width="184" height="124" viewBox="0 0 184 124" style="position:absolute;left:0;top:0">
<defs><filter id="b1" x="-5%" y="-5%" width="110%" height="110%"><feGaussianBlur stdDeviation="0.9"/></filter><filter id="b2" x="-10%" y="-10%" width="120%" height="120%"><feGaussianBlur stdDeviation="2.2"/></filter></defs>
<rect width="184" height="124" fill="#e7e4e1"/>
<g filter="url(#b1)">
<!-- shelf dark bg -->
<rect x="47" y="-2" width="124" height="128" fill="#2f2d2d"/>
<!-- lower-left shelf zone: lighter clutter -->
<rect x="47" y="50" width="28" height="33" fill="#8e8279"/>
<rect x="55" y="56" width="19" height="10" fill="#e6ddd2"/>
<rect x="57" y="68" width="17" height="12" fill="#d9cfc4"/>
<path d="M49 70 L53 68 L60 82 L55 83Z" fill="#caa36e"/>
<rect x="43" y="82" width="24" height="17" fill="#3b3b3f"/>
<rect x="30" y="99" width="45" height="14" fill="#bdb6b1"/>
<!-- brown door panel -->
<path d="M38.700 -1 L63.300 -1 L49 23 L47.400 84 L40 99 L25 99 L34.400 40Z" fill="#b99d88"/>
<path d="M44 -1 L64 -1 L50 20 L46 18Z" fill="#9a7d69"/>
<!-- books row1 -->
<rect x="50" y="3.500" width="50" height="18.500" fill="#e7c79c"/>
<rect x="62" y="3.500" width="4" height="18.500" fill="#f3e3c8"/><rect x="74" y="3.500" width="5" height="18.500" fill="#f1dfc2"/><rect x="88" y="4" width="3" height="18" fill="#f5ead6"/><rect x="69" y="4" width="2" height="18" fill="#d39a4e"/><rect x="83" y="4" width="2" height="18" fill="#d9a255"/>
<rect x="47" y="22" width="54" height="3.500" fill="#2b2929"/>
<!-- books row2 -->
<rect x="48" y="29.500" width="36" height="17.500" fill="#e2bb82"/>
<rect x="55" y="29.500" width="3" height="17.500" fill="#f0dcb8"/><rect x="66" y="29.500" width="4" height="17.500" fill="#efd7ae"/><rect x="61" y="30" width="2" height="17" fill="#cf9447"/><rect x="75" y="30" width="2" height="17" fill="#d29a50"/>
<rect x="47" y="47" width="40" height="3" fill="#2b2929"/>
<!-- col separators -->
<rect x="99.500" y="-1" width="3.500" height="50" fill="#3a3838"/>
<rect x="135" y="-1" width="3.500" height="126" fill="#3a3838"/>
<!-- middle column -->
<rect x="105" y="5.500" width="27" height="9.500" fill="#55524f"/>
<rect x="103" y="16.500" width="32" height="18.500" fill="#ecd4ae"/>
<rect x="103" y="15" width="28" height="2.500" fill="#f2f0ee"/>
<rect x="111" y="17" width="3" height="18" fill="#f6ead4"/><rect x="122" y="17" width="3" height="18" fill="#f7edda"/><rect x="117" y="17" width="1.500" height="18" fill="#d8a660"/>
<!-- right column -->
<rect x="139" y="10" width="31" height="16.500" fill="#e5c291"/>
<rect x="145" y="10" width="3" height="16.500" fill="#f3e2c4"/><rect x="151" y="10" width="2" height="16.500" fill="#d29c55"/>
<rect x="138" y="26.500" width="33" height="2" fill="#2b2929"/>
<rect x="154" y="38" width="15" height="9" fill="#eadcc8"/>
<rect x="138" y="46.500" width="33" height="3" fill="#2b2929"/>
<rect x="141" y="52" width="16" height="30" fill="#e9d6b8"/>
<rect x="141" y="57" width="16" height="1.500" fill="#d5a468"/><rect x="141" y="63" width="16" height="1.500" fill="#d5a468"/><rect x="141" y="69" width="16" height="1.500" fill="#d9ae78"/><rect x="141" y="75" width="16" height="1.500" fill="#d5a468"/>
<rect x="155" y="82" width="16" height="2.500" fill="#2b2929"/>
<rect x="154" y="86" width="15" height="15" fill="#e8d8c0"/>
<!-- right wall -->
<rect x="171" y="-1" width="14" height="88" fill="#ece9e7"/>
<rect x="171" y="87" width="14" height="38" fill="#e3c49a"/>
<rect x="171" y="91" width="14" height="2" fill="#f5ecdc"/><rect x="171" y="97" width="14" height="2" fill="#cf9c5c"/><rect x="171" y="103" width="14" height="2" fill="#f5ecdc"/><rect x="171" y="109" width="14" height="2" fill="#cf9c5c"/><rect x="171" y="115" width="14" height="2" fill="#f5ecdc"/>
<!-- lamp -->
<path d="M0 17 L3.300 17 L11.500 40 L0 40Z" fill="#2a2a2c"/>
<rect x="0" y="40" width="11.500" height="2.200" fill="#8a8a8c"/>
<path d="M8 42 L16.500 124" stroke="#2a2a2c" stroke-width="1.300" fill="none"/>
<path d="M0 64 L14 75 M0 86.500 L14 75.500 M0 112 L12 121" stroke="#8d5c3a" stroke-width="1.600" fill="none"/>
</g>
<g filter="url(#b1)">
<!-- shoulders -->
<path d="M27 124 L40 112 L78 103 L92 124Z" fill="#a9adb6"/>
<!-- hair back -->
<path d="M107 23 C88 23 78 38 76 58 C74 78 68 96 66 124 L172 124 C164 108 150 92 143 70 C139 50 130 24 107 23Z" fill="#94755c"/>
<path d="M143 70 C150 92 164 108 172 124 L150 124 C146 110 140 96 136 82Z" fill="#a88462"/>
<!-- scarf/neck -->
<path d="M83 108 C96 114 126 114 141 104 L146 124 L82 124Z" fill="#56585c"/>
<!-- face -->
<ellipse cx="108" cy="69" rx="27" ry="33" fill="#cbab9d"/>
<path d="M84 80 C90 104 126 104 132 80Z" fill="#c6a595"/>
<!-- bangs -->
<path d="M80 50 C84 30 100 24 112 25 C128 27 136 38 138 52 C128 42 112 38 98 42 C90 44 84 48 80 56Z" fill="#a08267"/>
<!-- hair sides -->
<path d="M80 50 C76 70 74 96 70 124 L84 124 C82 100 80 80 84 58Z" fill="#8b6b52"/>
<path d="M137 50 C140 66 142 84 152 104 L140 108 C134 90 134 70 133 56Z" fill="#8b6b52"/>
</g>
<g filter="url(#b2)">
<ellipse cx="92" cy="59.500" rx="5" ry="2" fill="#6b5a55"/>
<ellipse cx="119" cy="56.500" rx="5" ry="2" fill="#6b5a55"/>
<ellipse cx="104" cy="71" rx="3.500" ry="2.500" fill="#b08878"/>
<ellipse cx="106.500" cy="85" rx="9" ry="2.800" fill="#b47c82"/>
</g>
</svg>
</div>
 <div class="abs" style="left:151px;top:13px;width:28px;height:28px;border-radius:50%;background:#1a73e8"></div>
 <div class="abs" style="left:157px;top:23.700px;width:3.600px;height:6.600px;border-radius:1.800px;background:#fff"></div>
 <div class="abs" style="left:163.200px;top:19px;width:3.600px;height:16px;border-radius:1.800px;background:#fff"></div>
 <div class="abs" style="left:169.400px;top:23.700px;width:3.600px;height:6.600px;border-radius:1.800px;background:#fff"></div>
 <div class="tname" style="text-shadow:0 0 3px rgba(0,0,0,.6)">Ольга Степанюк</div>
</div>
<!-- tile 2 -->
<div class="tile" style="left:1232px;top:182px;width:190px;height:132px">
 <div class="mute"><svg style="position:absolute;left:4px;top:4px" width="20" height="20" viewBox="0 0 24 24"><path fill="#fff" d="M19 11h-1.700c0 .740-.160 1.430-.430 2.050l1.230 1.230c.560-.980.900-2.090.900-3.280zm-4.020.170c0-.060.020-.110.020-.170V5c0-1.660-1.340-3-3-3S9 3.340 9 5v.180l5.980 5.990zM4.270 3L3 4.270l6.010 6.010V11c0 1.660 1.330 3 2.990 3 .220 0 .440-.030.650-.080l1.660 1.660c-.710.330-1.500.520-2.310.520-2.760 0-5.300-2.100-5.300-5.100H5c0 3.410 2.720 6.230 6 6.720V21h2v-3.280c.910-.130 1.770-.450 2.540-.900L19.730 21 21 19.730 4.270 3z"/></svg></div>
 <div class="av" id="av2" style="left:66.500px;top:38px;width:57px;height:57px;background:#8a6a58;overflow:hidden"><svg width="57" height="57" viewBox="0 0 57 57" style="position:absolute;left:0;top:0"><defs><filter id="a2" x="-10%" y="-10%" width="120%" height="120%"><feGaussianBlur stdDeviation="1.100"/></filter></defs>
<rect width="57" height="57" fill="#e9d6c6"/>
<g filter="url(#a2)">
<path d="M0 34 L14 30 L20 57 L0 57Z" fill="#3a302c"/>
<path d="M22 2 C12 8 10 24 12 40 L8 57 L50 57 C52 40 44 22 38 8 C34 2 28 0 22 2Z" fill="#8a6a52"/>
<path d="M30 0 C40 4 52 20 57 40 L57 12 L44 0Z" fill="#ecdccb"/>
<path d="M33 6 C42 14 48 28 50 44 L57 44 L57 30 C52 18 44 8 36 2Z" fill="#e4cdb8"/>
<rect x="50" y="19" width="5" height="5" fill="#c98a3a"/>
<path d="M36 12 C43 20 47 32 49 48 L40 57 L32 57 L36 36Z" fill="#4a3a34"/>
<ellipse cx="27.500" cy="24.500" rx="10.500" ry="14.500" fill="#c99a82"/>
<path d="M14 20 C16 8 26 4 34 8 C28 8 20 12 18 24 C17 32 18 40 20 48 L12 50 C11 40 12 30 14 20Z" fill="#9a7658"/>
<path d="M20 38 C26 44 34 42 40 34 C46 40 50 48 50 57 L16 57 C16 50 18 44 20 38Z" fill="#2e2a2b"/>
<path d="M10 40 L16 36 L18 46 L14 50Z" fill="#d8d4d0"/>
<ellipse cx="22" cy="22" rx="3" ry="1.200" fill="#4a3a36"/><ellipse cx="33" cy="20.500" rx="3" ry="1.200" fill="#4a3a36"/>
<ellipse cx="28" cy="32" rx="5" ry="2.500" fill="#c2705c" opacity=".6"/>
</g></svg>
</div>
 <div class="tname" style="letter-spacing:-0.13px">Софія Явецька</div>
</div>
<!-- tile 3 -->
<div class="tile" style="left:1027px;top:327px;width:192px;height:132px">
 <div class="mute"><svg style="position:absolute;left:4px;top:4px" width="20" height="20" viewBox="0 0 24 24"><path fill="#fff" d="M19 11h-1.700c0 .740-.160 1.430-.430 2.050l1.230 1.230c.560-.980.900-2.090.900-3.280zm-4.020.170c0-.060.020-.110.020-.170V5c0-1.660-1.340-3-3-3S9 3.340 9 5v.180l5.980 5.990zM4.270 3L3 4.270l6.010 6.010V11c0 1.660 1.330 3 2.990 3 .220 0 .440-.030.650-.080l1.660 1.660c-.710.330-1.500.520-2.310.520-2.760 0-5.300-2.100-5.300-5.100H5c0 3.410 2.720 6.230 6 6.720V21h2v-3.280c.910-.130 1.770-.450 2.540-.900L19.730 21 21 19.730 4.270 3z"/></svg></div>
 <div class="av" style="left:67px;top:37px;width:58px;height:58px;background:#7b1fa2;font-size:29px;line-height:58px">O</div>
 <div class="tname">Ольга Степанюк</div>
</div>
<!-- tile 4 -->
<div class="tile" style="left:1232px;top:327px;width:190px;height:132px">
 <div class="mute"><svg style="position:absolute;left:4px;top:4px" width="20" height="20" viewBox="0 0 24 24"><path fill="#fff" d="M19 11h-1.700c0 .740-.160 1.430-.430 2.050l1.230 1.230c.560-.980.900-2.090.900-3.280zm-4.020.170c0-.060.020-.110.020-.170V5c0-1.660-1.340-3-3-3S9 3.340 9 5v.180l5.980 5.990zM4.270 3L3 4.270l6.010 6.010V11c0 1.660 1.330 3 2.990 3 .220 0 .440-.030.650-.080l1.660 1.660c-.710.330-1.500.520-2.310.520-2.760 0-5.300-2.100-5.300-5.100H5c0 3.410 2.720 6.230 6 6.720V21h2v-3.280c.910-.130 1.770-.450 2.540-.900L19.730 21 21 19.730 4.270 3z"/></svg></div>
 <div class="av" id="av4" style="left:66.500px;top:38px;width:57px;height:57px;background:#9a8468;overflow:hidden"><svg width="57" height="57" viewBox="0 0 57 57" style="position:absolute;left:0;top:0"><defs><filter id="a4" x="-10%" y="-10%" width="120%" height="120%"><feGaussianBlur stdDeviation=".8"/></filter><linearGradient id="sky4" x1="0" x2="0" y1="0" y2="1"><stop offset="0" stop-color="#a9bfdb"/><stop offset=".7" stop-color="#cfd4dc"/><stop offset="1" stop-color="#ecd6c8"/></linearGradient></defs>
<rect width="57" height="57" fill="#a87e5c"/>
<rect width="57" height="20" fill="url(#sky4)"/>
<g filter="url(#a4)">
<path d="M0 18 L6 17 L20 18 L33 21 L57 23 L57 29 L0 26.500Z" fill="#1f201d"/>
<rect x="0" y="27" width="57" height="30" fill="#a97f5b"/>
<rect x="30" y="36" width="27" height="14" fill="#b58a66" opacity=".7"/>
<path d="M24 11 C20 14 19 22 18.500 28 L30 29 C33 24 34 16 32 12 C30 9.500 26 9.500 24 11Z" fill="#9a785a"/>
<path d="M26 10 C30 9 33 12 33 16 L26 17Z" fill="#3b3530"/>
<ellipse cx="28.500" cy="19" rx="4" ry="5.500" fill="#d9b09a"/>
<path d="M16 29 C20 27 32 27 36 29 C38 36 39 46 39 56 L18 57 C14 54 10 50 10 48 C12 40 13 34 16 29Z" fill="#c3c7d0"/>
<path d="M20 32 L34 31 L36 54 L22 55Z" fill="#aeb6c6" opacity=".7"/>
<path d="M24 28 L32 28 L30 32 L26 32Z" fill="#d9b09a"/>
<path d="M11 49 L18 54" stroke="#d9a070" stroke-width="2"/>
</g></svg>
</div>
 <div class="tname">Іванка Веретчак</div>
</div>
<!-- tile 5 -->
<div class="tile" style="left:1027px;top:473px;width:192px;height:132px">
 <div class="mute"><svg style="position:absolute;left:4px;top:4px" width="20" height="20" viewBox="0 0 24 24"><path fill="#fff" d="M19 11h-1.700c0 .740-.160 1.430-.430 2.050l1.230 1.230c.560-.980.900-2.090.900-3.280zm-4.020.170c0-.060.020-.110.020-.170V5c0-1.660-1.340-3-3-3S9 3.340 9 5v.180l5.980 5.990zM4.270 3L3 4.270l6.010 6.010V11c0 1.660 1.330 3 2.990 3 .220 0 .440-.030.650-.080l1.660 1.660c-.710.330-1.500.520-2.310.520-2.760 0-5.300-2.100-5.300-5.100H5c0 3.410 2.720 6.230 6 6.720V21h2v-3.280c.910-.130 1.770-.450 2.540-.900L19.730 21 21 19.730 4.270 3z"/></svg></div>
 <div class="av" style="left:67px;top:37px;width:58px;height:58px;background:#f4511e;font-size:29px;line-height:58px">K</div>
 <div class="tname" style="letter-spacing:0">Katya Yatsishin</div>
</div>
<!-- tile 6 -->
<div class="tile" style="left:1232px;top:473px;width:190px;height:132px">
 <div class="mute"><svg style="position:absolute;left:4px;top:4px" width="20" height="20" viewBox="0 0 24 24"><path fill="#fff" d="M19 11h-1.700c0 .740-.160 1.430-.430 2.050l1.230 1.230c.560-.980.900-2.090.900-3.280zm-4.020.170c0-.060.020-.110.020-.170V5c0-1.660-1.340-3-3-3S9 3.340 9 5v.180l5.980 5.990zM4.270 3L3 4.270l6.010 6.010V11c0 1.660 1.330 3 2.990 3 .220 0 .440-.030.650-.080l1.660 1.660c-.710.330-1.500.520-2.310.520-2.760 0-5.300-2.100-5.300-5.100H5c0 3.410 2.720 6.230 6 6.720V21h2v-3.280c.910-.130 1.770-.450 2.540-.900L19.730 21 21 19.730 4.270 3z"/></svg></div>
 <div class="av" style="left:66px;top:37px;width:58px;height:58px;background:#8d6e63;font-size:29px;line-height:58px">K</div>
 <div class="tname">Каріна Лізанець</div>
</div>
<!-- tile 7 -->
<div class="tile" style="left:1027px;top:618px;width:192px;height:132px">
 <div class="av" style="left:62px;top:30px;width:38px;height:38px;background:#5c6bc0;font-size:19px;line-height:38px">В</div>
 <div class="av" id="av7" style="left:94px;top:28px;width:43px;height:43px;border:2px solid #3c4043;background:#7a5a48;overflow:hidden"><svg width="39" height="39" viewBox="0 0 39 39" style="position:absolute;left:0;top:0"><defs><filter id="a7" x="-10%" y="-10%" width="120%" height="120%"><feGaussianBlur stdDeviation=".6"/></filter></defs>
<rect width="39" height="39" fill="#6b4a30"/>
<g filter="url(#a7)">
<path d="M4 0 L18 0 L10 10 L0 14Z" fill="#b9cfe4"/>
<path d="M14 0 L39 0 L39 18 L20 12Z" fill="#7a5236"/>
<path d="M0 24 L20 30 L12 39 L0 39Z" fill="#8a6a3a"/>
<path d="M22 20 L39 24 L39 39 L24 39Z" fill="#5a3c28"/>
<path d="M0 14.500 L39 22 M0 21 L36 31" stroke="#7fa3cc" stroke-width="1.300" fill="none"/>
<path d="M3 15 L3 30 M30 21 L30 36" stroke="#6a8ab0" stroke-width="1"/>
<path d="M12 13 C14 10 20 12 21 16 L19 25 L13 24Z" fill="#d8382a"/>
<path d="M13 24 L19 25 L21 39 L14 39 L15 30Z" fill="#141214"/>
<ellipse cx="16.500" cy="8" rx="2.300" ry="2.800" fill="#d9b09a"/>
<path d="M14 6 C15 3.500 19 3.500 19.500 7 L19 10 L18 6.500Z" fill="#2a1e1a"/>
</g></svg>
</div>
 <div class="abs" style="left:0;top:83.500px;width:192px;text-align:center;color:#e8eaed;font-weight:bold;font-size:14.500px;letter-spacing:.3px">Ще 4 особи</div>
</div>
<!-- tile 8 (self video) -->
<div class="tile" style="left:1232px;top:618px;width:190px;height:132px">
 <div class="abs" id="t8v" style="left:0;top:12px;width:190px;height:108px;overflow:hidden;background:#9c9a98"><svg width="190" height="108" viewBox="0 0 190 108" style="position:absolute;left:0;top:0">
<defs><filter id="c1" x="-10%" y="-10%" width="120%" height="120%"><feGaussianBlur stdDeviation="3"/></filter><filter id="c2" x="-5%" y="-5%" width="110%" height="110%"><feGaussianBlur stdDeviation="1"/></filter>
<linearGradient id="wg" x1="0" x2="1" y1="0" y2="0"><stop offset="0" stop-color="#a5a2a2"/><stop offset=".35" stop-color="#9c9490"/><stop offset=".7" stop-color="#908a86"/><stop offset=".88" stop-color="#7b7d7f"/><stop offset="1" stop-color="#676d71"/></linearGradient></defs>
<rect width="190" height="108" fill="url(#wg)"/>
<g filter="url(#c1)">
<rect x="-5" y="60" width="175" height="55" fill="#8f857d" opacity=".75"/>
<rect x="-5" y="70" width="40" height="45" fill="#7d7a7c" opacity=".6"/>
<rect x="66" y="-6" width="48" height="45" fill="#5f656d"/>
<rect x="74" y="12" width="26" height="14" fill="#8a909c"/>
<rect x="70" y="-4" width="16" height="10" fill="#5a6a88"/>
<rect x="84" y="26" width="22" height="10" fill="#6a5a52"/>
<rect x="166" y="40" width="30" height="75" fill="#53585c"/>
<rect x="170" y="-5" width="25" height="50" fill="#6a7278"/>
</g>
<g filter="url(#c2)">
<path d="M86 56 C72 57 66 70 64 84 C62 94 60 102 58 108 L114 108 C112 100 110 90 108 80 C106 66 100 56 86 56Z" fill="#4b403d"/>
<path d="M84 64 C74 65 68 74 68 88 C68 98 72 104 76 108 L100 108 C102 100 102 92 101 84 C100 72 94 64 84 64Z" fill="#bfaaa3"/>
<path d="M70 80 C67 86 69 100 74 108 L79 108 C76 98 75 88 76 80Z" fill="#ddd2cc"/>
<path d="M70 70 C74 62 90 60 98 68 C92 66 80 66 72 74Z" fill="#4b403d"/>
<path d="M66 84 L100 82" stroke="#6a6a72" stroke-width="1.500"/>
<ellipse cx="76" cy="85.500" rx="5" ry="2.500" fill="#9aa0aa" opacity=".8"/><ellipse cx="93" cy="84.500" rx="5" ry="2.500" fill="#8a909c" opacity=".8"/>
<ellipse cx="88" cy="101" rx="5" ry="1.500" fill="#a88078"/>
</g>
</svg>
</div>
 <div class="mute"><svg style="position:absolute;left:4px;top:4px" width="20" height="20" viewBox="0 0 24 24"><path fill="#fff" d="M19 11h-1.700c0 .740-.160 1.430-.430 2.050l1.230 1.230c.560-.980.900-2.090.900-3.280zm-4.020.170c0-.060.020-.110.020-.170V5c0-1.660-1.340-3-3-3S9 3.340 9 5v.180l5.980 5.990zM4.270 3L3 4.270l6.010 6.010V11c0 1.660 1.330 3 2.990 3 .220 0 .440-.030.650-.080l1.660 1.660c-.710.330-1.500.520-2.310.520-2.760 0-5.300-2.100-5.300-5.100H5c0 3.410 2.720 6.230 6 6.720V21h2v-3.280c.910-.130 1.770-.450 2.540-.900L19.730 21 21 19.730 4.270 3z"/></svg></div>
 <div class="tname" style="bottom:14px">Ви</div>
</div>


<!-- MEET CONTROLS -->
<div class="abs" style="left:27px;top:776px;height:36px;line-height:36px;color:#fff;font-size:17px;font-weight:bold;white-space:nowrap;letter-spacing:-0.3px">15:52</div>
<div class="abs" style="left:82px;top:785px;width:1px;height:17px;background:#dadce0"></div>
<div class="abs" style="left:96px;top:776px;height:36px;line-height:36px;color:#fff;font-size:17px;font-weight:bold;white-space:nowrap;letter-spacing:.45px">vbs-ypkh-ccx</div>
<div class="cbtn" style="left:543px;background:#ea4335"></div>
<div class="cbtn" style="left:600px"></div>
<div class="cbtn" style="left:657px"></div>
<div class="cbtn" style="left:714px"></div>
<div class="cbtn" style="left:772px"></div>
<div class="cbtn" style="left:829px;width:62px;border-radius:22px;background:#ea4335"></div>
<svg class="abs" style="left:553px;top:782px" width="24" height="24" viewBox="0 0 24 24"><path fill="#fff" d="M19 11h-1.700c0 .740-.160 1.430-.430 2.050l1.230 1.230c.560-.980.900-2.090.900-3.280zm-4.020.170c0-.060.020-.110.020-.170V5c0-1.660-1.340-3-3-3S9 3.340 9 5v.180l5.980 5.990zM4.270 3L3 4.270l6.010 6.010V11c0 1.660 1.330 3 2.990 3 .220 0 .440-.030.650-.080l1.660 1.660c-.710.330-1.500.520-2.310.520-2.760 0-5.300-2.100-5.300-5.100H5c0 3.410 2.720 6.230 6 6.720V21h2v-3.280c.910-.130 1.770-.450 2.540-.900L19.730 21 21 19.730 4.270 3z"/></svg>
<svg class="abs" style="left:610px;top:782px" width="24" height="24" viewBox="0 0 24 24"><path fill="#fff" d="M15 8v8H5V8h10m1-2H4c-.550 0-1 .450-1 1v10c0 .550.450 1 1 1h12c.550 0 1-.450 1-1v-3.500l4 4v-11l-4 4V7c0-.550-.450-1-1-1z"/></svg>
<svg class="abs" style="left:667px;top:781px" width="24" height="24" viewBox="0 0 24 24"><path fill="#fff" d="M21 7c0-1.380-1.120-2.500-2.500-2.500-.170 0-.340.020-.500.050V4c0-1.380-1.120-2.500-2.500-2.500-.230 0-.460.030-.670.090C14.460.660 13.560 0 12.500 0c-1.230 0-2.250.890-2.460 2.060C9.870 2.020 9.690 2 9.500 2 8.120 2 7 3.120 7 4.500v5.890c-.340-.310-.760-.540-1.220-.660l-.770-.210c-.830-.230-1.700.090-2.190.830-.380.570-.400 1.310-.150 1.950l2.560 6.430C6.490 21.910 9.570 24 12.980 24c4.420 0 8.020-3.580 8.020-8V7zm-2 9c0 3.310-2.690 6-6.020 6-2.610 0-4.950-1.590-5.910-4.010l-2.600-6.540.530.140c.460.120.830.460 1 .900L7 15h2V4.500c0-.280.220-.500.500-.500s.500.220.500.500V12h2V2.500c0-.280.220-.500.500-.500s.500.220.500.500V12h2V4c0-.280.220-.500.500-.500s.500.220.500.500v8h2V7c0-.280.220-.500.500-.500s.500.220.500.500v9z"/></svg>
<svg class="abs" style="left:724px;top:782px" width="24" height="24" viewBox="0 0 24 24"><path fill="#fff" d="M21 3H3c-1.110 0-2 .890-2 2v14c0 1.110.890 2 2 2h18c1.110 0 2-.890 2-2V5c0-1.110-.890-2-2-2zm0 16.020H3V4.980h18v14.040zM10 12H8l4-4 4 4h-2v4h-4v-4z"/></svg>
<svg class="abs" style="left:782px;top:782px" width="24" height="24" viewBox="0 0 24 24"><path fill="#fff" d="M12 8c1.100 0 2-.900 2-2s-.900-2-2-2-2 .900-2 2 .900 2 2 2zm0 2c-1.100 0-2 .900-2 2s.900 2 2 2 2-.900 2-2-.900-2-2-2zm0 6c-1.100 0-2 .900-2 2s.900 2 2 2 2-.900 2-2-.900-2-2-2z"/></svg>
<svg class="abs" style="left:847px;top:781px" width="26" height="26" viewBox="0 0 24 24"><path fill="#fff" d="M12 9c-1.600 0-3.150.250-4.600.720v3.100c0 .390-.230.740-.560.900-.980.490-1.870 1.120-2.660 1.850-.180.180-.430.280-.700.280-.280 0-.530-.110-.710-.290L.290 13.080c-.180-.170-.290-.420-.290-.700 0-.280.110-.530.290-.710C3.340 8.780 7.460 7 12 7s8.660 1.780 11.710 4.670c.180.180.290.430.290.710 0 .280-.110.530-.290.710l-2.480 2.480c-.180.180-.430.290-.710.290-.270 0-.520-.110-.700-.280-.790-.740-1.690-1.360-2.670-1.850-.330-.160-.560-.500-.560-.900v-3.100C15.150 9.250 13.600 9 12 9z"/></svg>
<!-- right icons 28px -->
<svg class="abs" style="left:1221.500px;top:780px" width="28" height="28" viewBox="0 0 24 24"><path fill="#fff" d="M11 7h2v2h-2zm0 4h2v6h-2zm1-9C6.480 2 2 6.480 2 12s4.480 10 10 10 10-4.480 10-10S17.520 2 12 2zm0 18c-4.410 0-8-3.590-8-8s3.590-8 8-8 8 3.590 8 8-3.590 8-8 8z"/></svg>
<svg class="abs" style="left:1274px;top:780px" width="28" height="28" viewBox="0 0 24 24"><path fill="#fff" d="M9 13.750c-2.340 0-7 1.170-7 3.500V19h14v-1.750c0-2.330-4.660-3.500-7-3.500zM4.340 17c.840-.580 2.870-1.250 4.660-1.250s3.820.670 4.660 1.250H4.340zM9 12c1.930 0 3.500-1.570 3.500-3.500S10.930 5 9 5 5.500 6.570 5.500 8.500 7.070 12 9 12zm0-5c.830 0 1.500.670 1.500 1.500S9.830 10 9 10s-1.500-.670-1.500-1.500S8.170 7 9 7zm7.040 6.810c1.160.840 1.960 1.960 1.960 3.440V19h4v-1.750c0-2.020-3.500-3.170-5.960-3.440zM15 12c1.930 0 3.500-1.570 3.500-3.500S16.930 5 15 5c-.540 0-1.040.130-1.500.350.630.890 1 1.980 1 3.150s-.370 2.260-1 3.150c.460.220.960.350 1.500.350z"/></svg>
<div class="abs" style="left:1289px;top:762px;width:22px;height:22px;border-radius:50%;background:#5f6368;color:#fff;font-size:11.500px;font-weight:bold;text-align:center;line-height:22px;letter-spacing:-0.3px">12</div>
<svg class="abs" style="left:1327.500px;top:780px" width="28" height="28" viewBox="0 0 24 24"><path fill="#fff" d="M4 4h16v12H5.170L4 17.170V4m0-2c-1.100 0-1.990.900-1.990 2L2 22l4-4h14c1.100 0 2-.900 2-2V4c0-1.100-.900-2-2-2H4zm2 10h8v2H6v-2zm0-3h12v2H6V9zm0-3h12v2H6V6z"/></svg>
<svg class="abs" style="left:1379.500px;top:780px" width="28" height="28" viewBox="0 0 24 24"><path fill="#fff" d="M12 2l-5.500 9h11L12 2zm0 3.840L13.930 9h-3.870L12 5.840zM17.500 13c-2.490 0-4.500 2.010-4.500 4.500s2.010 4.500 4.500 4.500 4.500-2.010 4.500-4.500-2.010-4.500-4.500-4.500zm0 7c-1.380 0-2.500-1.120-2.500-2.500s1.120-2.500 2.500-2.500 2.500 1.120 2.500 2.500-1.120 2.500-2.500 2.500zM3 21.500h8v-8H3v8zm2-6h4v4H5v-4z"/></svg>



<!-- TASKBAR -->
<div id="taskbar" class="abs"></div>
<!-- windows taskbar -->
<svg class="abs" style="left:16px;top:860px" width="17" height="17" viewBox="0 0 12 12"><path d="M0 1.700 L5 1 V5.700 H0Z M5.800 .900 L12 0 V5.700 H5.800Z M0 6.400 H5 V11 L0 10.300Z M5.800 6.400 H12 V12 L5.800 11.100Z" fill="#fff"/></svg>
<svg class="abs" style="left:63px;top:860px" width="18" height="18" viewBox="0 0 18 18"><circle cx="11" cy="7" r="5" stroke="#fff" stroke-width="1.500" fill="none"/><path d="M7.300 10.700 L1 17" stroke="#fff" stroke-width="1.800"/></svg>
<!-- explorer -->
<svg class="abs" style="left:112px;top:848px" width="22" height="19" viewBox="0 0 22 19"><path d="M0 2 a1 1 0 0 1 1-1 H8 L10 3 H21 a1 1 0 0 1 1 1 V18 H0Z" fill="#f3c14b"/><rect x="0" y="5" width="22" height="13" rx="1" fill="#fbdd83"/><path d="M5 10 H17 V19 H14 V14 H8 V19 H5Z" fill="#3a8fe0"/><rect x="5" y="10" width="12" height="2" fill="#79bdf5"/></svg>
<!-- chrome active -->
<div class="abs" style="left:148px;top:838px;width:46px;height:40px;background:#2d2d2d"></div>
<div class="abs" style="left:194px;top:838px;width:2px;height:40px;background:#3a3a3a"></div>
<div class="abs" style="left:160px;top:845px;width:24px;height:24px;border-radius:50%;background:conic-gradient(from -60deg,#ea4335 0 120deg,#fbbc05 120deg 240deg,#34a853 240deg 360deg)"></div>
<div class="abs" style="left:166px;top:851px;width:12px;height:12px;border-radius:50%;background:#4285f4;border:2px solid #fff"></div>
<div class="abs" style="left:174px;top:858px;width:11px;height:13px;border-radius:4px;background:#e9c98a"></div>
<div class="abs" style="left:174px;top:857px;width:11px;height:5px;border-radius:4px 4px 0 0;background:#f4dc6b"></div>
<div class="abs" style="left:175px;top:862px;width:9px;height:3px;background:#333"></div>
<div class="abs" style="left:148px;top:876px;width:46px;height:2px;background:#9fe3d0"></div>
<!-- zoom -->
<div class="abs" style="left:209px;top:846px;width:24px;height:24px;border-radius:9px;background:#0b5cff"></div>
<div class="abs" style="left:209px;top:846px;width:24px;height:24px;line-height:23px;text-align:center;color:#fff;font-size:7px;font-weight:bold;letter-spacing:-0.200px">zoom</div>
<div class="abs" style="left:201px;top:876px;width:40px;height:2px;background:#9fe3d0"></div>
<!-- viber -->
<div class="abs" style="left:258px;top:846px;width:23px;height:22px;border-radius:10px 10px 10px 4px;background:#a9b7f0;border:2px solid #5b6fd8"></div>
<svg class="abs" style="left:263px;top:850px" width="12" height="13" viewBox="0 0 12 13"><path d="M2.500 1 C1 2 1 4 3 7 C5 10 7.500 12 9.500 11 L10.500 9.500 L8 8 L7 9 C5.500 8.500 4.500 7 4 5.500 L5 4.500 L4 1.500Z" fill="#4a5cc8"/></svg>
<div class="abs" style="left:268px;top:857px;width:16px;height:14px;border-radius:4px;background:#e5402f;color:#fff;font-size:10px;line-height:14px;text-align:center">23</div>
<div class="abs" style="left:250px;top:876px;width:40px;height:2px;background:#9fe3d0"></div>
<!-- floppy -->
<div class="abs" style="left:307px;top:846px;width:24px;height:24px;border-radius:2px;background:#2a56c6"></div>
<div class="abs" style="left:312px;top:846px;width:13px;height:8px;background:#1b2f7a"></div>
<div class="abs" style="left:320px;top:847px;width:3px;height:6px;background:#c9d3ee"></div>
<div class="abs" style="left:310px;top:857px;width:18px;height:13px;background:#f4ecd8"></div>
<div class="abs" style="left:310px;top:860px;width:18px;height:1px;background:#d66"></div>
<div class="abs" style="left:310px;top:863px;width:18px;height:1px;background:#d66"></div>
<div class="abs" style="left:310px;top:866px;width:18px;height:1px;background:#d66"></div>
<div class="abs" style="left:299px;top:876px;width:40px;height:2px;background:#9fe3d0"></div>
<!-- record -->
<div class="abs" style="left:357px;top:847px;width:22px;height:22px;border-radius:50%;border:2px solid #fff;background:#151515"></div>
<div class="abs" style="left:362.500px;top:852.500px;width:11px;height:11px;border-radius:50%;background:#e0261c"></div>
<div class="abs" style="left:348px;top:876px;width:40px;height:2px;background:#9fe3d0"></div>
<!-- powerpoint -->
<div class="abs" style="left:413px;top:848px;width:18px;height:20px;background:#e8482f;border-radius:1px"></div>
<div class="abs" style="left:420px;top:852px;width:9px;height:8px;background:#fff;opacity:.85"></div>
<div class="abs" style="left:420px;top:862px;width:9px;height:1.500px;background:#fff;opacity:.85"></div>
<div class="abs" style="left:405px;top:846px;width:15px;height:24px;background:#c8321d"></div>
<div class="abs" style="left:405px;top:846px;width:15px;height:24px;line-height:24px;text-align:center;color:#fff;font-weight:bold;font-size:14px">P</div>
<div class="abs" style="left:397px;top:876px;width:40px;height:2px;background:#9fe3d0"></div>
<!-- right side -->
<div class="abs" style="left:1149px;top:861px;font-size:12.500px;color:#fff;white-space:nowrap;line-height:16px">Робочий стіл</div>
<div class="abs" style="left:1244px;top:838px;font-size:13px;color:#fff;line-height:18px;font-weight:bold">»</div>
<div class="abs" style="left:1259px;top:838px;width:24px;height:42px;background:#2b2b2b"></div>
<svg class="abs" style="left:1264px;top:863px" width="14" height="9" viewBox="0 0 14 9"><path d="M1 8 L7 1.500 L13 8" stroke="#fff" stroke-width="1.300" fill="none"/></svg>
<div class="abs" style="left:1290px;top:861px;font-size:12px;color:#fff;white-space:nowrap;line-height:16px;letter-spacing:-0.300px">УКР</div>
<div class="abs" style="left:1339px;top:842px;font-size:12px;color:#fff;white-space:nowrap;line-height:16px;letter-spacing:-0.400px">15:52</div>
<div class="abs" style="left:1329px;top:861px;font-size:12.500px;color:#fff;white-space:nowrap;line-height:16px;letter-spacing:-0.100px">п'ятниця</div>
<svg class="abs" style="left:1398px;top:860px" width="18" height="17" viewBox="0 0 18 17"><path d="M1 1 H17 V12 H11 V16 L7 12 H1Z" stroke="#fff" stroke-width="1.200" fill="none"/></svg>
<div class="abs" style="left:1434px;top:838px;width:1px;height:62px;background:#555"></div>
<!-- tooltip -->
<div class="abs" style="left:1233px;top:880px;width:203px;height:20px;background:#fff;border:1px solid #767676;font-size:12px;color:#333;line-height:18px;white-space:nowrap;padding-left:6px;letter-spacing:.02px">Відображати приховані піктограми</div>


</div>
</body>
</html>
